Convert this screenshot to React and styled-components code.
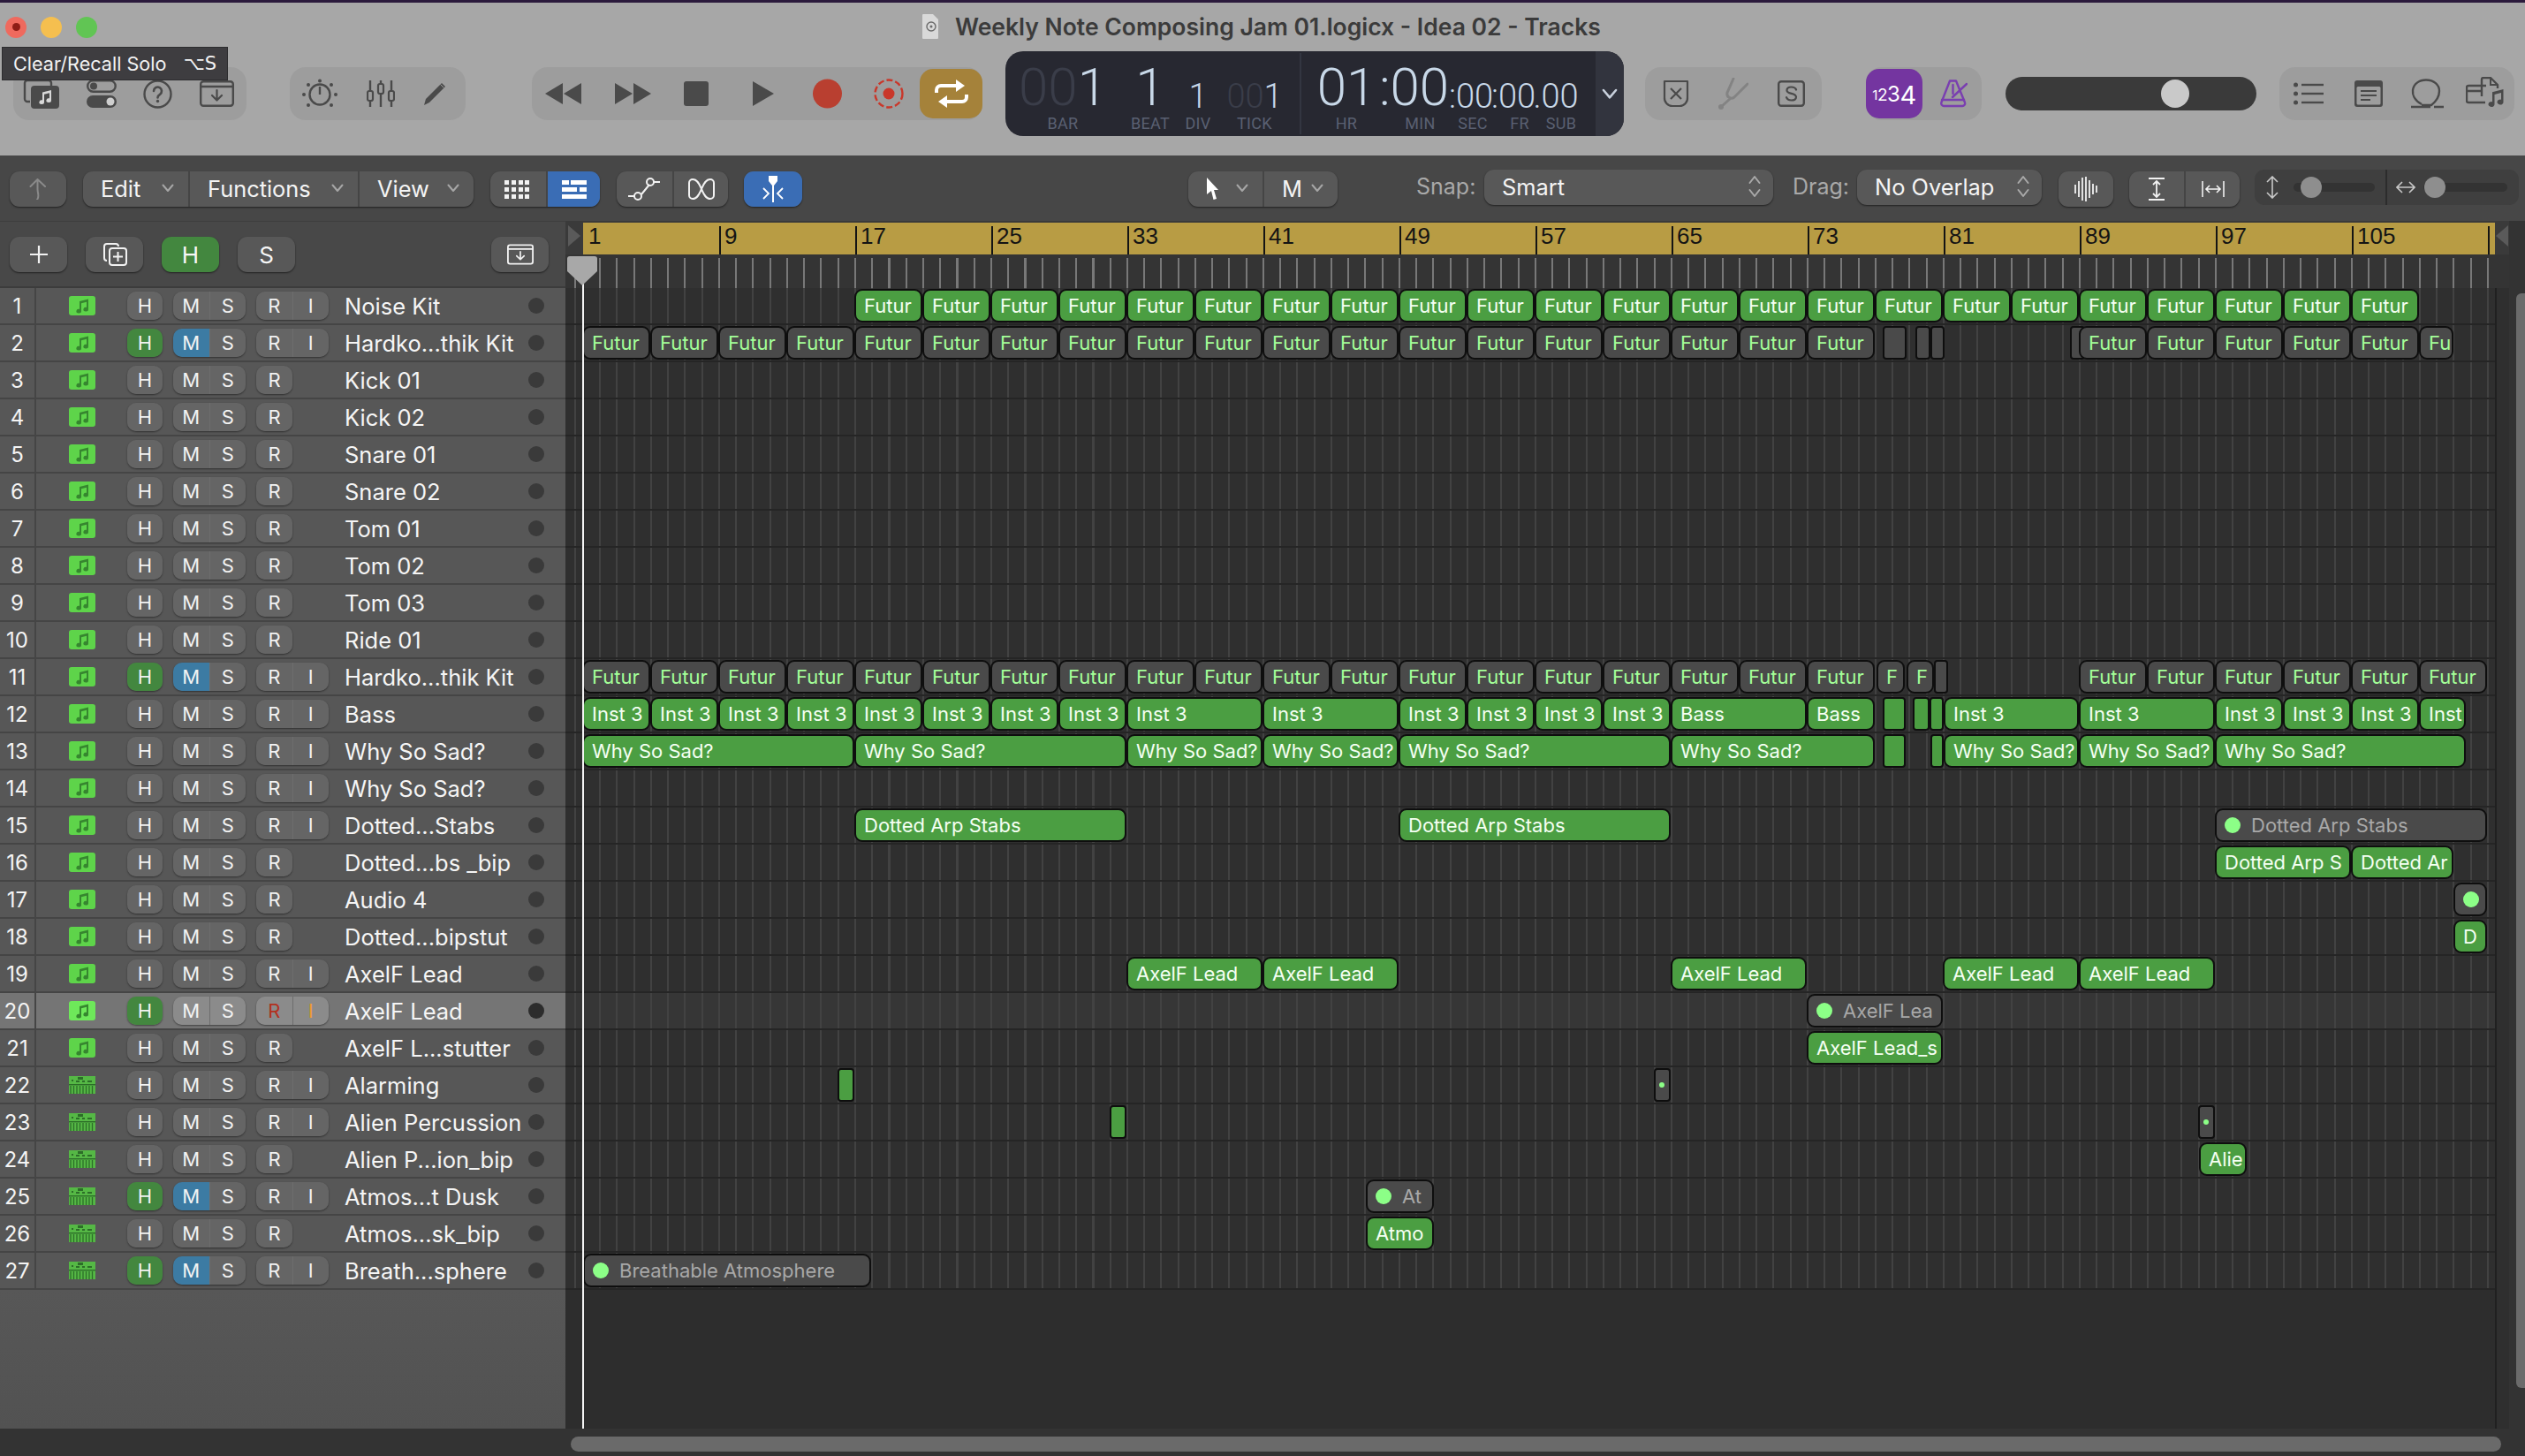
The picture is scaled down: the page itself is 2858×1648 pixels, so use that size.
import React from "react"
import styled, { createGlobalStyle } from "styled-components"

const Global = createGlobalStyle`
  html, body {
    margin: 0;
    background: #333;
    overflow: hidden;
  }
  * {
    box-sizing: border-box;
  }
  body {
    font-family: Inter, "Noto Sans", sans-serif;
  }
`

const BAR = 19.25
const bx = (bar) => 659 + (bar - 1) * BAR

const Window = styled.div`
  position: relative;
  width: 2858px;
  height: 1648px;
  display: flex;
  flex-direction: column;
  overflow: hidden;
`

const TopBar = styled.header`
  height: 176px;
  flex: none;
  background: #a7a7a7;
  border-top: 3px solid #2b1a3c;
`

const TitleRow = styled.div`
  height: 55px;
  padding-left: 6px;
  display: flex;
  align-items: center;
`

const Lights = styled.div`
  display: flex;
  gap: 16px;
`

const Light = styled.span`
  width: 24px;
  height: 24px;
  border-radius: 50%;
  background: ${(p) => p.$color};
  display: flex;
  align-items: center;
  justify-content: center;
  &::after {
    content: "";
    display: ${(p) => (p.$dot ? "block" : "none")};
    width: 9px;
    height: 9px;
    border-radius: 50%;
    background: #8e1d16;
  }
`

const Title = styled.div`
  margin-left: 934px;
  padding-bottom: 2px;
  display: flex;
  align-items: center;
  gap: 19px;
  font-size: 26.5px;
  font-weight: 600;
  color: #3b3b3b;
  white-space: nowrap;
`

const ToolRow = styled.div`
  height: 96px;
  padding-left: 15px;
  display: flex;
  align-items: center;
`

const Group = styled.div`
  width: ${(p) => p.$w}px;
  margin-left: ${(p) => p.$ml || 0}px;
  height: 60px;
  flex: none;
  border-radius: 18px;
  background: #9d9d9d;
  display: flex;
  align-items: center;
  justify-content: ${(p) => (p.$start ? "flex-start" : "space-between")};
  padding: ${(p) => p.$pad || "0"};
`

const Spot = styled.span`
  margin-left: ${(p) => p.$ml || 0}px;
  flex: none;
  display: flex;
`

const LoopButton = styled.div`
  width: 71px;
  height: 56px;
  border-radius: 15px;
  background: #a5823a;
  display: flex;
  align-items: center;
  justify-content: center;
`

const Lcd = styled.div`
  width: 700px;
  height: 96px;
  margin-left: 26px;
  flex: none;
  border-radius: 20px;
  background: #272831;
  display: flex;
  overflow: hidden;
  font-family: Roboto, Inter, sans-serif;
`

const LcdBody = styled.div`
  flex: 1;
  padding-left: 15px;
  display: flex;
`

const LcdChevron = styled.div`
  width: 32px;
  flex: none;
  background: #32343e;
  display: flex;
  align-items: center;
  justify-content: center;
`

const LcdCell = styled.div`
  width: ${(p) => p.$w}px;
  margin-left: ${(p) => p.$ml || 0}px;
  flex: none;
  display: flex;
  flex-direction: column;
  align-items: center;
`

const LcdValue = styled.div`
  height: 70px;
  display: flex;
  align-items: flex-end;
  font-size: ${(p) => (p.$big ? 60 : 38)}px;
  line-height: ${(p) => (p.$big ? 58 : 38)}px;
  font-weight: 300;
  color: #c8d8e8;
  white-space: nowrap;
`

const Dim = styled.span`
  color: #3a3d49;
`

const LcdLabel = styled.div`
  margin-top: 2px;
  padding-left: ${(p) => p.$shift || 0}px;
  font-size: 18px;
  line-height: 20px;
  color: #5a6072;
  letter-spacing: 0.3px;
`

const LcdDivider = styled.div`
  width: 2px;
  margin: 2px 15px 2px 19px;
  flex: none;
  background: #333641;
`

const CountIn = styled.div`
  width: 64px;
  height: 56px;
  border-radius: 15px;
  background: #7435a0;
  color: #fff;
  display: flex;
  align-items: center;
  justify-content: center;
  padding-top: 2px;
  font-weight: 400;
`

const CountDigit = styled.span`
  font-size: ${(p) => p.$s}px;
  line-height: 1;
  letter-spacing: -0.5px;
`

const Volume = styled.div`
  width: 284px;
  height: 38px;
  margin-left: 27px;
  flex: none;
  border-radius: 19px;
  background: #3a3a3a;
  padding-left: 176px;
  display: flex;
  align-items: center;
`

const VolumeKnob = styled.div`
  width: 32px;
  height: 32px;
  border-radius: 50%;
  background: #c9c9c9;
`

const Tooltip = styled.div`
  position: absolute;
  left: 2px;
  top: 53px;
  width: 256px;
  height: 38px;
  padding: 0 12px;
  background: #3e3d40;
  border: 1px solid #2d2d2f;
  color: #f2f2f2;
  font-size: 21.6px;
  display: flex;
  align-items: center;
  justify-content: space-between;
`

const ToolKey = styled.span`
  font-family: "DejaVu Sans", Inter, sans-serif;
  font-size: 21px;
`

const EditBar = styled.div`
  height: 74px;
  flex: none;
  background: #474747;
  padding: 18px 0 0 11px;
  display: flex;
  align-items: flex-start;
`

const Seg = styled.div`
  height: 40px;
  margin-left: ${(p) => p.$ml || 0}px;
  flex: none;
  border-radius: 11px;
  background: #585858;
  box-shadow: 0 1px 2px rgba(0, 0, 0, 0.55);
  display: flex;
  overflow: hidden;
`

const SegItem = styled.div`
  width: ${(p) => p.$w}px;
  flex: none;
  height: 100%;
  display: flex;
  align-items: center;
  justify-content: ${(p) => (p.$spread ? "space-between" : "center")};
  padding: ${(p) => (p.$spread ? "0 16px 2px 20px" : p.$pad || "0")};
  background: ${(p) => (p.$blue ? "#3a6db5" : "transparent")};
  color: #f4f4f4;
  font-size: 25.4px;
  & + & {
    border-left: 2px solid ${(p) => (p.$blue ? "#3a6db5" : "#454545")};
  }
`

const FieldLabel = styled.div`
  width: ${(p) => p.$w}px;
  margin-left: ${(p) => p.$ml}px;
  flex: none;
  height: 34px;
  display: flex;
  align-items: center;
  font-size: 25px;
  color: #a9a9a9;
`

const Select = styled.div`
  width: ${(p) => p.$w}px;
  height: 40px;
  margin-top: -2px;
  flex: none;
  border-radius: 11px;
  background: #585858;
  box-shadow: 0 1px 2px rgba(0, 0, 0, 0.55);
  padding: 0 14px 2px 20px;
  display: flex;
  align-items: center;
  justify-content: space-between;
  color: #f4f4f4;
  font-size: 25.4px;
`

const ZoomWell = styled.div`
  width: 299px;
  height: 40px;
  margin: -2px 0 0 17px;
  flex: none;
  border-radius: 11px;
  background: #3f3f3f;
  display: flex;
`

const ZoomPart = styled.div`
  width: ${(p) => p.$w}px;
  flex: none;
  display: flex;
  align-items: center;
  gap: ${(p) => p.$gap}px;
  padding: ${(p) => p.$pad};
  & + & {
    border-left: 2px solid #2c2c2c;
  }
`

const ZoomTrack = styled.div`
  flex: 1;
  height: 10px;
  border-radius: 5px;
  background: #333;
  display: flex;
  align-items: center;
`

const ZoomKnob = styled.div`
  width: 24px;
  height: 24px;
  flex: none;
  border-radius: 50%;
  background: #8e8e8e;
  margin-left: ${(p) => p.$ml}px;
`

const Main = styled.div`
  flex: 1;
  min-height: 0;
  display: flex;
`

const TrackColumn = styled.section`
  width: 640px;
  flex: none;
  display: flex;
  flex-direction: column;
`

const TrackTools = styled.div`
  height: 76px;
  flex: none;
  background: #484848;
  border-top: 1px solid #3e3e3e;
  border-bottom: 2px solid #3c3c3c;
  padding: 17px 0 0 11px;
  display: flex;
  align-items: flex-start;
`

const SquareButton = styled.div`
  width: 65px;
  height: 40px;
  margin-left: ${(p) => p.$ml || 0}px;
  flex: none;
  border-radius: 11px;
  background: ${(p) => (p.$on ? "#43873f" : "#585858")};
  box-shadow: 0 1px 2px rgba(0, 0, 0, 0.55);
  color: #f6f6f6;
  font-size: 26px;
  display: flex;
  align-items: center;
  justify-content: center;
`

const TrackRow = styled.div`
  height: 42px;
  flex: none;
  display: flex;
  align-items: center;
  background: ${(p) => (p.$sel ? "#757575" : "#575757")};
  border-bottom: 2px solid #454545;
`

const TrackNumber = styled.div`
  width: 41px;
  height: 100%;
  flex: none;
  border-right: 2px solid #454545;
  color: #f4f4f4;
  font-size: 24px;
  display: flex;
  align-items: center;
  justify-content: center;
`

const IconSlot = styled.div`
  width: 30px;
  height: 22px;
  margin: 0 36px 0 37px;
  flex: none;
  display: flex;
  align-items: center;
`

const Cluster = styled.div`
  width: ${(p) => p.$w}px;
  height: 32px;
  margin-right: ${(p) => p.$mr || 0}px;
  flex: none;
  display: flex;
`

const Pair = styled.div`
  width: ${(p) => p.$w}px;
  height: 32px;
  border-radius: 10px;
  overflow: hidden;
  display: flex;
  box-shadow: 0 1px 2px rgba(0, 0, 0, 0.45);
`

const TrackBtn = styled.div`
  flex: 1;
  height: 100%;
  background: ${(p) => p.$bg || (p.$sel ? "#8b8b8b" : "#656565")};
  color: ${(p) => p.$fg || "#f2f2f2"};
  font-size: 22px;
  display: flex;
  align-items: center;
  justify-content: center;
  & + & {
    border-left: 1px solid ${(p) => (p.$sel ? "#6d6d6d" : "#4d4d4d")};
  }
`

const TrackName = styled.div`
  width: 208px;
  flex: none;
  margin-left: 18px;
  font-size: 25.5px;
  color: #f5f5f5;
  white-space: nowrap;
  overflow: hidden;
`

const TrackDot = styled.div`
  width: 18px;
  height: 18px;
  flex: none;
  border-radius: 50%;
  background: ${(p) => (p.$sel ? "#2c2c2c" : "#3a3a3a")};
`

const TrackRest = styled.div`
  flex: 1;
  background: linear-gradient(#575757, #525252);
`

const Arrange = styled.section`
  position: relative;
  flex: 1;
  background: #2d2d2d;
  display: flex;
  flex-direction: column;
`

const RulerRow = styled.div`
  height: 38px;
  flex: none;
  padding-top: 2px;
  background: #3a3a3a;
  display: flex;
`

const RulerCap = styled.div`
  width: ${(p) => p.$w}px;
  flex: none;
  display: flex;
  align-items: center;
  justify-content: center;
  padding-bottom: 6px;
`

const Ruler = styled.div`
  width: 2164px;
  flex: none;
  background: #b89c44;
  display: flex;
  overflow: hidden;
`

const RulerBar = styled.div`
  width: ${8 * BAR}px;
  flex: none;
  margin-top: 4px;
  padding-left: 4px;
  border-left: 2px solid ${(p) => (p.$first ? "transparent" : "#141414")};
  color: #141414;
  font-family: "Liberation Sans", Arial, sans-serif;
  font-size: 26px;
  line-height: 23px;
`

const BeatStrip = styled.div`
  height: 38px;
  flex: none;
  padding-top: 4px;
  background: #343434;
`

const BeatTicks = styled.div`
  width: 2184px;
  height: 100%;
  background-image: repeating-linear-gradient(to right, #787878 0 2px, transparent 2px ${BAR}px);
  background-position-x: 19px;
`

const Lanes = styled.div`
  width: 2184px;
  flex: none;
`

const Lane = styled.div`
  position: relative;
  height: 42px;
  border-bottom: 2px solid #252525;
  background-color: ${(p) => (p.$sel ? "#363636" : "#2f2f2f")};
  background-image: repeating-linear-gradient(to right, #424242 0 2px, transparent 2px ${BAR}px);
  background-position-x: 19px;
`

const Region = styled.div.attrs((p) => ({
  style: { left: p.$from - 640, width: p.$to - p.$from },
}))`
  position: absolute;
  top: 1px;
  height: 38px;
  padding: 0 0 1px 9px;
  border: 2px solid #0e0e0e;
  border-radius: ${(p) => (p.$narrow ? 4 : 9)}px;
  background: ${(p) => (p.$kind === "g" ? "#4b9e42" : "#4a4a4a")};
  color: ${(p) => (p.$kind === "g" ? "#f4fff2" : p.$kind === "m" ? "#a4ff98" : "#a8a8a8")};
  font-size: 22px;
  display: flex;
  align-items: center;
  gap: 12px;
  white-space: nowrap;
  overflow: hidden;
`

const RegionDot = styled.span`
  width: ${(p) => (p.$tiny ? 6 : 18)}px;
  height: ${(p) => (p.$tiny ? 6 : 18)}px;
  flex: none;
  border-radius: 50%;
  background: #8cff87;
  margin-left: ${(p) => (p.$tiny ? -5 : 0)}px;
`

const ArrangeRest = styled.div`
  flex: 1;
  background: #2d2d2d;
`

const RightEdge = styled.div`
  position: absolute;
  right: 0;
  top: 76px;
  bottom: 0;
  width: 16px;
  background: #2f2f2f;
  border-left: 2px solid #202020;
`

const PlayLine = styled.div`
  position: absolute;
  left: 19px;
  top: 40px;
  bottom: 0;
  width: 2px;
  background: #f4f4f4;
`

const PlayHead = styled.svg`
  position: absolute;
  left: 2px;
  top: 40px;
`

const VScroll = styled.div`
  width: 18px;
  flex: none;
  background: #333;
  padding: 82px 0 0 8px;
`

const VThumb = styled.div`
  height: 1239px;
  border-radius: 6px 0 0 6px;
  background: #6b6b6b;
`

const BottomBar = styled.div`
  height: 31px;
  flex: none;
  background: #333;
  padding: 9px 0 0 646px;
`

const HThumb = styled.div`
  width: 2185px;
  height: 17px;
  border-radius: 9px;
  background: #6a6a6a;
`

const INK = "#4a4a4a"

const Ico = ({ w, h, children, ...rest }) => (
  <svg width={w} height={h} viewBox={`0 0 ${w} ${h}`} fill="none" style={{ flex: "none" }} {...rest}>
    {children}
  </svg>
)

const NotePath = ({ x, y, s = 1, color }) => (
  <g transform={`translate(${x} ${y}) scale(${s})`} fill={color}>
    <path d="M4 2.5 L14 0 V11.5 A2.8 2.4 0 1 1 12 9.3 V3.2 L6 4.7 V13.5 A2.8 2.4 0 1 1 4 11.3 Z" />
  </g>
)

const LibraryIcon = () => (
  <Ico w={41} h={33}>
    <path d="M8 25 H5 a3 3 0 0 1 -3 -3 V4 a3 3 0 0 1 3 -3 H29 a3 3 0 0 1 3 3 V7" stroke={INK} strokeWidth="2.4" />
    <rect x="9" y="7" width="32" height="26" rx="4" fill={INK} />
    <NotePath x={18} y={12} color="#d8d8d8" />
  </Ico>
)

const ToggleIcon = () => (
  <Ico w={34} h={32}>
    <rect x="1.2" y="1.2" width="31.5" height="12.5" rx="6.2" stroke={INK} strokeWidth="2.4" />
    <circle cx="8" cy="7.5" r="4" fill={INK} />
    <rect x="0" y="18" width="34" height="14" rx="7" fill={INK} />
    <circle cx="27" cy="25" r="4.5" fill="#cfcfcf" />
  </Ico>
)

const HelpIcon = () => (
  <Ico w={33} h={33}>
    <circle cx="16.5" cy="16.5" r="15" stroke={INK} strokeWidth="2.4" />
    <path d="M12 13 a4.5 4.5 0 1 1 7 3.8 c-1.6 1 -2.5 1.8 -2.5 3.6" stroke={INK} strokeWidth="2.6" strokeLinecap="round" />
    <circle cx="16.5" cy="24.5" r="1.7" fill={INK} />
  </Ico>
)

const StoreIcon = ({ color = INK, w = 39, h = 30 }) => (
  <svg width={w} height={h} viewBox="0 0 39 30" fill="none" style={{ flex: "none" }}>
    <rect x="1.2" y="1.2" width="36.6" height="27.6" rx="3" stroke={color} strokeWidth="2.4" />
    <path d="M1 7 H38" stroke={color} strokeWidth="2.4" />
    <path d="M19.5 11 V22 M14 17 L19.5 22.5 L25 17" stroke={color} strokeWidth="2.2" strokeLinecap="round" strokeLinejoin="round" />
  </svg>
)

const KnobIcon = () => (
  <Ico w={40} h={34}>
    <circle cx="20" cy="18" r="11.5" stroke={INK} strokeWidth="2.4" />
    <path d="M20 18 V9" stroke={INK} strokeWidth="2.4" />
    {[[20, 2.5], [7, 7], [33, 7], [2, 18], [38, 18], [7, 30], [33, 30]].map(([cx, cy]) => (
      <circle key={`${cx}-${cy}`} cx={cx} cy={cy} r="2" fill={INK} />
    ))}
  </Ico>
)

const MixerIcon = () => (
  <Ico w={32} h={30}>
    {[[4, 17], [16, 9], [28, 17]].map(([x, y]) => (
      <g key={x}>
        <path d={`M${x} 0 V30`} stroke={INK} strokeWidth="2.4" />
        <rect x={x - 3} y={y - 5} width="6" height="11" rx="2" fill="#9d9d9d" stroke={INK} strokeWidth="2.2" />
      </g>
    ))}
  </Ico>
)

const PencilIcon = () => (
  <Ico w={27} h={28}>
    <path d="M1 27 L3 20 L21 2 L25 6 L7 24 Z" fill={INK} />
    <path d="M19.5 3.5 L23.5 7.5" stroke="#9d9d9d" strokeWidth="1" />
  </Ico>
)

const DoubleArrow = ({ left }) => (
  <Ico w={45} h={26}>
    <g fill={INK} transform={left ? "translate(45 0) scale(-1 1)" : undefined}>
      <path d="M2 1 L22 13 L2 25 Z" />
      <path d="M23 1 L43 13 L23 25 Z" />
    </g>
  </Ico>
)

const StopIcon = () => (
  <Ico w={28} h={28}>
    <rect width="28" height="28" rx="3" fill={INK} />
  </Ico>
)

const PlayIcon = () => (
  <Ico w={26} h={28}>
    <path d="M1 0 L25 14 L1 28 Z" fill={INK} />
  </Ico>
)

const RecordIcon = () => (
  <Ico w={33} h={34}>
    <circle cx="16.5" cy="17" r="16.5" fill="#b93f30" />
  </Ico>
)

const CycleRecIcon = () => (
  <Ico w={34} h={34}>
    <circle cx="17" cy="17" r="15.5" stroke="#c9372a" strokeWidth="2.4" strokeDasharray="7 3" />
    <circle cx="17" cy="17" r="6.5" fill="#c9372a" />
  </Ico>
)

const LoopIcon = () => (
  <Ico w={38} h={32}>
    <path d="M2 15 V12 a5 5 0 0 1 5 -5 H27" stroke="#fff" strokeWidth="4" />
    <path d="M24 0 L34 7 L24 14 Z" fill="#fff" />
    <path d="M36 17 V20 a5 5 0 0 1 -5 5 H11" stroke="#fff" strokeWidth="4" />
    <path d="M14 18 L4 25 L14 32 Z" fill="#fff" />
  </Ico>
)

const ChevronIcon = ({ color = "#a6a6a6", w = 14, h = 10 }) => (
  <svg width={w} height={h} viewBox="0 0 14 10" fill="none" style={{ flex: "none" }}>
    <path d="M1.5 1.5 L7 8 L12.5 1.5" stroke={color} strokeWidth="2" strokeLinecap="round" strokeLinejoin="round" />
  </svg>
)

const UpDownIcon = () => (
  <Ico w={14} h={26}>
    <path d="M1.5 9 L7 2 L12.5 9 M1.5 17 L7 24 L12.5 17" stroke="#a9a9a9" strokeWidth="2" strokeLinecap="round" strokeLinejoin="round" />
  </Ico>
)

const ScoreXIcon = () => (
  <Ico w={30} h={32}>
    <path d="M2 2 H28 V20 a9 9 0 0 1 -9 10 H11 a9 9 0 0 1 -9 -10 Z" stroke={INK} strokeWidth="2.2" strokeLinejoin="round" />
    <path d="M9 10 L21 22 M21 10 L9 22" stroke={INK} strokeWidth="2.2" />
  </Ico>
)

const TunerIcon = () => (
  <Ico w={34} h={36}>
    <path d="M17 1 L10 17 a5 5 0 0 0 8 5 L33 7 M13 24 L3 33" stroke="#838383" strokeWidth="3" strokeLinecap="round" />
    <circle cx="3" cy="33" r="3" fill="#838383" />
  </Ico>
)

const SoloBoxIcon = () => (
  <Ico w={31} h={30}>
    <rect x="1.2" y="1.2" width="28.6" height="27.6" rx="3" stroke={INK} strokeWidth="2.4" />
    <path d="M21 10.5 C20 8 17.5 7.5 15.5 7.5 C12.5 7.5 10.5 9 10.5 11.2 C10.5 16 21 13.8 21 18.8 C21 21.2 18.5 22.5 15.5 22.5 C13 22.5 10.8 21.5 10 19.2" stroke={INK} strokeWidth="2.2" strokeLinecap="round" />
  </Ico>
)

const MetronomeIcon = () => (
  <Ico w={32} h={32}>
    <g stroke="#7a3fb0" strokeWidth="2.4" strokeLinejoin="round" strokeLinecap="round">
      <path d="M12 1.5 H19 L29 26 a3 3 0 0 1 -3 4 H5 a3 3 0 0 1 -2.6 -4 Z" />
      <path d="M3 23 H28" />
      <path d="M15 20 L31 5" />
      <path d="M15.5 6 V16" />
    </g>
  </Ico>
)

const ListIcon = () => (
  <Ico w={34} h={26}>
    {[3, 13, 23].map((y) => (
      <g key={y}>
        <circle cx="2.5" cy={y} r="2.5" fill={INK} />
        <path d={`M9 ${y} H34`} stroke={INK} strokeWidth="2.4" />
      </g>
    ))}
  </Ico>
)

const NotesIcon = () => (
  <Ico w={32} h={30}>
    <rect width="32" height="30" rx="3" fill={INK} />
    <rect x="2.5" y="7" width="27" height="20.5" rx="1.5" fill="#9d9d9d" />
    <path d="M7 12 H25 M7 17 H25 M7 22 H18" stroke={INK} strokeWidth="2.2" />
  </Ico>
)

const LoopsIcon = () => (
  <Ico w={37} h={34}>
    <path d="M12 29 C3 24 1.5 17 2 13 C3 6 9 1.5 17 1.5 C26 1.5 32 7 32 14 C32 21 28 26 23 30 H12" stroke={INK} strokeWidth="2.4" />
    <path d="M0 32 H22 M26 32 H37" stroke={INK} strokeWidth="2.4" />
  </Ico>
)

const BrowserIcon = () => (
  <Ico w={46} h={38}>
    <path d="M23 10 H3 a2 2 0 0 0 -2 2 V27 a2 2 0 0 0 2 2 H22 M1 16 H18" stroke={INK} strokeWidth="2.4" />
    <path d="M18 22 V3 a2 2 0 0 1 2 -2 H28 L36 9 V13" stroke={INK} strokeWidth="2.4" strokeLinejoin="round" />
    <path d="M28 1 V9 H36" stroke={INK} strokeWidth="2" />
    <NotePath x={25} y={14} s={1.25} color={INK} />
  </Ico>
)

const BackIcon = () => (
  <Ico w={21} h={24}>
    <path d="M9 24 C12 20 9.5 17 9.5 12 V2 M1.5 9 L9.5 1 L18 9" stroke="#8a8a8a" strokeWidth="2" strokeLinecap="round" strokeLinejoin="round" />
  </Ico>
)

const GridIcon = () => (
  <Ico w={28} h={21}>
    {[0, 8, 16].map((y) =>
      [0, 8, 16, 23].map((x) => <rect key={`${x}-${y}`} x={x} y={y} width="5" height="5" fill="#f2f2f2" />)
    )}
  </Ico>
)

const RowsIcon = () => (
  <Ico w={28} h={21}>
    <g fill="#fff">
      <rect x="0" y="0" width="8" height="5" />
      <rect x="10" y="0" width="18" height="5" />
      <rect x="0" y="8" width="17" height="5" />
      <rect x="20" y="8" width="8" height="5" />
      <rect x="0" y="16" width="28" height="5" />
    </g>
  </Ico>
)

const CurveIcon = () => (
  <Ico w={36} h={26}>
    <path d="M0 21 H7 M15 19 L24 8 M29 5 H36" stroke="#f2f2f2" strokeWidth="2" />
    <circle cx="11" cy="21" r="4" stroke="#f2f2f2" strokeWidth="2" />
    <circle cx="25" cy="5" r="4" stroke="#f2f2f2" strokeWidth="2" />
  </Ico>
)

const CrossCurveIcon = () => (
  <Ico w={30} h={24}>
    <path d="M1 5 a4 4 0 0 1 4 -4 C11 1 13 8 15 12 C17 16 19 23 25 23 a4 4 0 0 0 4 -4 V5 a4 4 0 0 0 -4 -4 C19 1 17 8 15 12 C13 16 11 23 5 23 a4 4 0 0 1 -4 -4 Z" stroke="#f2f2f2" strokeWidth="2" />
  </Ico>
)

const FlexIcon = () => (
  <Ico w={24} h={30}>
    <path d="M7 0 H17 V6 L13 11 V30 H11 V11 L7 6 Z" fill="#fff" />
    <path d="M1 14 L7 20 L1 26 M23 14 L17 20 L23 26" stroke="#fff" strokeWidth="1.8" />
  </Ico>
)

const CursorIcon = () => (
  <Ico w={15} h={25}>
    <path d="M1 0 L14 14 L9 14 L12 24 L8.5 25 L6 15 L1 19 Z" fill="#fff" />
  </Ico>
)

const WaveIcon = () => (
  <Ico w={26} h={28}>
    {[[1, 5], [5, 9], [9, 13], [13, 14], [17, 10], [21, 6], [25, 4]].map(([x, r]) => (
      <path key={x} d={`M${x} ${14 - r} V${14 + r}`} stroke="#f2f2f2" strokeWidth="1.8" />
    ))}
  </Ico>
)

const FitVIcon = () => (
  <Ico w={18} h={26}>
    <path d="M0 1 H18 M0 25 H18 M9 5 V21 M5 8 L9 4 L13 8 M5 18 L9 22 L13 18" stroke="#f2f2f2" strokeWidth="1.8" />
  </Ico>
)

const FitHIcon = () => (
  <Ico w={26} h={18}>
    <path d="M1 0 V18 M25 0 V18 M5 9 H21 M9 5 L5 9 L9 13 M17 5 L21 9 L17 13" stroke="#f2f2f2" strokeWidth="1.6" />
  </Ico>
)

const VArrowIcon = () => (
  <Ico w={14} h={26}>
    <path d="M7 1 V25 M1 7 L7 1 L13 7 M1 19 L7 25 L13 19" stroke="#c8c8c8" strokeWidth="1.6" />
  </Ico>
)

const HArrowIcon = () => (
  <Ico w={22} h={16}>
    <path d="M1 8 H21 M7 2 L1 8 L7 14 M15 2 L21 8 L15 14" stroke="#c8c8c8" strokeWidth="1.6" />
  </Ico>
)

const PlusIcon = () => (
  <Ico w={20} h={20}>
    <path d="M10 0 V20 M0 10 H20" stroke="#f2f2f2" strokeWidth="2.2" />
  </Ico>
)

const DuplicateIcon = () => (
  <Ico w={28} h={26}>
    <path d="M5 20 a3 3 0 0 1 -3 -3 V4 a3 3 0 0 1 3 -3 H15 a3 3 0 0 1 3 3" stroke="#f2f2f2" strokeWidth="2" />
    <rect x="8" y="6" width="19" height="19" rx="3" stroke="#f2f2f2" strokeWidth="2" />
    <path d="M17.5 10 V21 M12 15.5 H23" stroke="#f2f2f2" strokeWidth="2" />
  </Ico>
)

const FileIcon = () => (
  <Ico w={18} h={28}>
    <path d="M0 1 a1 1 0 0 1 1 -1 H12 L18 6 V27 a1 1 0 0 1 -1 1 H1 a1 1 0 0 1 -1 -1 Z" fill="#d9d9d9" />
    <circle cx="10" cy="14" r="5" stroke="#6a6a6a" strokeWidth="1.4" />
    <circle cx="10" cy="14" r="1.5" fill="#6a6a6a" />
  </Ico>
)

const AudioTrackIcon = ({ sel }) => (
  <Ico w={30} h={22}>
    <rect width="30" height="22" rx="3" fill={sel ? "#6ee85a" : "#5ed44a"} />
    <NotePath x={8} y={3.5} color="#36862f" />
  </Ico>
)

const SynthTrackIcon = () => (
  <Ico w={30} h={20}>
    <rect width="30" height="20" fill="#55b845" />
    <g fill="#2c6e28">
      <rect x="10" y="1" width="6" height="3" />
      <rect x="3" y="4" width="2" height="2" />
      <rect x="8" y="5" width="4" height="2" />
      <rect x="15" y="5" width="3" height="2" />
      <rect x="21" y="5" width="5" height="2" />
      <rect x="0" y="9" width="30" height="1.4" />
    </g>
    {[2, 5.5, 9, 12.5, 16, 19.5, 23, 26.5].map((x) => (
      <path key={x} d={`M${x} 11 V20`} stroke="#2c6e28" strokeWidth="1.3" />
    ))}
  </Ico>
)

const seq = (from, to, step, label, kind) => {
  const out = []
  for (let b = from; b < to; b += step) out.push([bx(b), bx(b + step), label, kind])
  return out
}

const span = (from, to, label) => [bx(from), bx(to), label, "g"]

const regionRows = {
  1: seq(17, 109, 4, "Futur", "g"),
  2: [
    ...seq(1, 77, 4, "Futur", "m"),
    [2131, 2158, "", "m"],
    [2168, 2185, "", "m"],
    [2185, 2201, "", "m"],
    [2343, 2360, "", "m"],
    ...seq(89, 109, 4, "Futur", "m"),
    [bx(109), 2777, "Fu", "m"],
  ],
  11: [
    ...seq(1, 77, 4, "Futur", "m"),
    [2124, 2156, "F", "m"],
    [2158, 2189, "F", "m"],
    [2189, 2205, "", "m"],
    ...seq(89, 113, 4, "Futur", "m"),
  ],
  12: [
    ...seq(1, 33, 4, "Inst 3", "g"),
    span(33, 41, "Inst 3"),
    span(41, 49, "Inst 3"),
    ...seq(49, 65, 4, "Inst 3", "g"),
    span(65, 73, "Bass"),
    span(73, 77, "Bass"),
    [2131, 2157, "", "g"],
    [2165, 2184, "", "g"],
    [2184, 2200, "", "g"],
    [2200, bx(89), "Inst 3", "g"],
    span(89, 97, "Inst 3"),
    ...seq(97, 109, 4, "Inst 3", "g"),
    [bx(109), 2791, "Inst", "g"],
  ],
  13: [
    span(1, 17, "Why So Sad?"),
    span(17, 33, "Why So Sad?"),
    span(33, 41, "Why So Sad?"),
    span(41, 49, "Why So Sad?"),
    span(49, 65, "Why So Sad?"),
    span(65, 77, "Why So Sad?"),
    [2131, 2157, "", "g"],
    [2185, 2200, "", "g"],
    [2200, bx(89), "Why So Sad?", "g"],
    span(89, 97, "Why So Sad?"),
    [bx(97), 2791, "Why So Sad?", "g"],
  ],
  15: [
    span(17, 33, "Dotted Arp Stabs"),
    span(49, 65, "Dotted Arp Stabs"),
    [bx(97), bx(113), "Dotted Arp Stabs", "d"],
  ],
  16: [
    [bx(97), bx(105), "Dotted Arp S", "g"],
    [bx(105), 2777, "Dotted Ar", "g"],
  ],
  17: [[2777, 2815, "", "d"]],
  18: [[2777, 2815, "D", "g"]],
  19: [span(33, 41, "AxelF Lead"), span(41, 49, "AxelF Lead"), span(65, 73, "AxelF Lead"), span(81, 89, "AxelF Lead"), span(89, 97, "AxelF Lead")],
  20: [[bx(73), bx(81), "AxelF Lea", "d"]],
  21: [[bx(73), bx(81), "AxelF Lead_s", "g"]],
  22: [
    [948, 967, "", "g"],
    [1872, 1891, "", "t"],
  ],
  23: [
    [1256, 1275, "", "g"],
    [2488, 2507, "", "t"],
  ],
  24: [[2489, 2543, "Alie", "g"]],
  25: [[1546, 1623, "At", "d"]],
  26: [[1546, 1623, "Atmo", "g"]],
  27: [[660, 986, "Breathable Atmosphere", "d"]],
}

const tracks = [
  ["Noise Kit", "I"],
  ["Hardko...thik Kit", "IHM"],
  ["Kick 01"],
  ["Kick 02"],
  ["Snare 01"],
  ["Snare 02"],
  ["Tom 01"],
  ["Tom 02"],
  ["Tom 03"],
  ["Ride 01"],
  ["Hardko...thik Kit", "IHM"],
  ["Bass", "I"],
  ["Why So Sad?", "I"],
  ["Why So Sad?", "I"],
  ["Dotted...Stabs", "I"],
  ["Dotted...bs _bip"],
  ["Audio 4"],
  ["Dotted...bipstut"],
  ["AxelF Lead", "I"],
  ["AxelF Lead", "IH"],
  ["AxelF L...stutter"],
  ["Alarming", "I"],
  ["Alien Percussion", "I"],
  ["Alien P...ion_bip"],
  ["Atmos...t Dusk", "IHM"],
  ["Atmos...sk_bip"],
  ["Breath...sphere", "IHM"],
]

const SELECTED = 20
const rulerBars = Array.from({ length: 15 }, (_, i) => 1 + i * 8)

function Track({ index, name, flags = "" }) {
  const sel = index === SELECTED
  return (
    <TrackRow $sel={sel}>
      <TrackNumber>{index}</TrackNumber>
      <IconSlot>{index < 22 ? <AudioTrackIcon sel={sel} /> : <SynthTrackIcon />}</IconSlot>
      <Cluster $w={40} $mr={12}>
        <Pair $w={40}>
          <TrackBtn $sel={sel} $bg={flags.includes("H") ? "#43873f" : undefined}>
            H
          </TrackBtn>
        </Pair>
      </Cluster>
      <Cluster $w={82} $mr={12}>
        <Pair $w={82}>
          <TrackBtn $sel={sel} $bg={flags.includes("M") ? "#3c7ba3" : undefined}>
            M
          </TrackBtn>
          <TrackBtn $sel={sel}>S</TrackBtn>
        </Pair>
      </Cluster>
      <Cluster $w={82}>
        <Pair $w={flags.includes("I") ? 82 : 41}>
          <TrackBtn $sel={sel} $fg={sel ? "#b3301e" : undefined}>
            R
          </TrackBtn>
          {flags.includes("I") && (
            <TrackBtn $sel={sel} $fg={sel ? "#e89b2c" : undefined}>
              I
            </TrackBtn>
          )}
        </Pair>
      </Cluster>
      <TrackName>{name}</TrackName>
      <TrackDot $sel={sel} />
    </TrackRow>
  )
}

function TrackLane({ index }) {
  const regions = regionRows[index] || []
  return (
    <Lane $sel={index === SELECTED}>
      {regions.map(([from, to, label, kind]) => (
        <Region
          key={`${from}-${to}`}
          $from={from}
          $to={to}
          $kind={kind === "t" ? "d" : kind}
          $narrow={to - from < 30 && !label && kind !== "d"}
        >
          {kind === "d" && <RegionDot />}
          {kind === "t" && <RegionDot $tiny />}
          {label}
        </Region>
      ))}
    </Lane>
  )
}

function Transport() {
  return (
    <Lcd>
      <LcdBody>
        <LcdCell $w={100}>
          <LcdValue $big>
            <Dim>00</Dim>1
          </LcdValue>
          <LcdLabel>BAR</LcdLabel>
        </LcdCell>
        <LcdCell $w={44} $ml={27}>
          <LcdValue $big>1</LcdValue>
          <LcdLabel>BEAT</LcdLabel>
        </LcdCell>
        <LcdCell $w={36} $ml={14}>
          <LcdValue>1</LcdValue>
          <LcdLabel>DIV</LcdLabel>
        </LcdCell>
        <LcdCell $w={64} $ml={14}>
          <LcdValue>
            <Dim>00</Dim>1
          </LcdValue>
          <LcdLabel>TICK</LcdLabel>
        </LcdCell>
        <LcdDivider />
        <LcdCell $w={72}>
          <LcdValue $big>01</LcdValue>
          <LcdLabel>HR</LcdLabel>
        </LcdCell>
        <LcdCell $w={81}>
          <LcdValue $big>:00</LcdValue>
          <LcdLabel $shift={14}>MIN</LcdLabel>
        </LcdCell>
        <LcdCell $w={48}>
          <LcdValue>:00</LcdValue>
          <LcdLabel $shift={4}>SEC</LcdLabel>
        </LcdCell>
        <LcdCell $w={48}>
          <LcdValue>:00</LcdValue>
          <LcdLabel $shift={14}>FR</LcdLabel>
        </LcdCell>
        <LcdCell $w={48}>
          <LcdValue>.00</LcdValue>
          <LcdLabel $shift={12}>SUB</LcdLabel>
        </LcdCell>
      </LcdBody>
      <LcdChevron>
        <ChevronIcon color="#c8d0dc" w={18} h={13} />
      </LcdChevron>
    </Lcd>
  )
}

export default function App() {
  return (
    <Window>
      <Global />
      <TopBar>
        <TitleRow>
          <Lights>
            <Light $color="#ef6a5e" $dot />
            <Light $color="#f5bf4f" />
            <Light $color="#61c554" />
          </Lights>
          <Title>
            <FileIcon />
            Weekly Note Composing Jam 01.logicx - Idea 02 - Tracks
          </Title>
        </TitleRow>
        <ToolRow>
          <Group $w={264} $pad="0 14px 0 11px">
            <LibraryIcon />
            <ToggleIcon />
            <HelpIcon />
            <StoreIcon />
          </Group>
          <Group $w={199} $ml={49} $pad="0 21px 0 14px">
            <KnobIcon />
            <MixerIcon />
            <PencilIcon />
          </Group>
          <Group $w={510} $ml={75} $start $pad="0 0 0 13px">
            <DoubleArrow left />
            <Spot $ml={34}>
              <DoubleArrow />
            </Spot>
            <Spot $ml={35}>
              <StopIcon />
            </Spot>
            <Spot $ml={49}>
              <PlayIcon />
            </Spot>
            <Spot $ml={43}>
              <RecordIcon />
            </Spot>
            <Spot $ml={36}>
              <CycleRecIcon />
            </Spot>
            <Spot $ml={18}>
              <LoopButton>
                <LoopIcon />
              </LoopButton>
            </Spot>
          </Group>
          <Transport />
          <Group $w={200} $ml={24} $pad="0 19px 0 20px">
            <ScoreXIcon />
            <TunerIcon />
            <SoloBoxIcon />
          </Group>
          <Group $w={131} $ml={50} $pad="0 16px 0 0">
            <CountIn>
              <CountDigit $s={15}>1</CountDigit>
              <CountDigit $s={19}>2</CountDigit>
              <CountDigit $s={24}>3</CountDigit>
              <CountDigit $s={29}>4</CountDigit>
            </CountIn>
            <MetronomeIcon />
          </Group>
          <Volume>
            <VolumeKnob />
          </Volume>
          <Group $w={266} $ml={26} $start $pad="0 0 0 16px">
            <ListIcon />
            <Spot $ml={35}>
              <NotesIcon />
            </Spot>
            <Spot $ml={32}>
              <LoopsIcon />
            </Spot>
            <Spot $ml={25}>
              <BrowserIcon />
            </Spot>
          </Group>
        </ToolRow>
      </TopBar>

      <EditBar>
        <Seg>
          <SegItem $w={64}>
            <BackIcon />
          </SegItem>
        </Seg>
        <Seg $ml={19}>
          <SegItem $w={119} $spread>
            Edit
            <ChevronIcon />
          </SegItem>
          <SegItem $w={192} $spread>
            Functions
            <ChevronIcon />
          </SegItem>
          <SegItem $w={131} $spread>
            View
            <ChevronIcon />
          </SegItem>
        </Seg>
        <Seg $ml={19}>
          <SegItem $w={63} $pad="0 4px 0 0">
            <GridIcon />
          </SegItem>
          <SegItem $w={61} $blue>
            <RowsIcon />
          </SegItem>
        </Seg>
        <Seg $ml={19}>
          <SegItem $w={63} $pad="0 2px 0 0">
            <CurveIcon />
          </SegItem>
          <SegItem $w={63}>
            <CrossCurveIcon />
          </SegItem>
        </Seg>
        <Seg $ml={18}>
          <SegItem $w={66} $blue>
            <FlexIcon />
          </SegItem>
        </Seg>
        <Seg $ml={437}>
          <SegItem $w={84} $spread>
            <CursorIcon />
            <ChevronIcon />
          </SegItem>
          <SegItem $w={85} $spread>
            M
            <ChevronIcon />
          </SegItem>
        </Seg>
        <FieldLabel $w={77} $ml={89}>
          Snap:
        </FieldLabel>
        <Select $w={327}>
          Smart
          <UpDownIcon />
        </Select>
        <FieldLabel $w={73} $ml={22}>
          Drag:
        </FieldLabel>
        <Select $w={209}>
          No Overlap
          <UpDownIcon />
        </Select>
        <Seg $ml={19}>
          <SegItem $w={62}>
            <WaveIcon />
          </SegItem>
        </Seg>
        <Seg $ml={18}>
          <SegItem $w={62}>
            <FitVIcon />
          </SegItem>
          <SegItem $w={63}>
            <FitHIcon />
          </SegItem>
        </Seg>
        <ZoomWell>
          <ZoomPart $w={148} $gap={17} $pad="0 12px 0 13px">
            <VArrowIcon />
            <ZoomTrack>
              <ZoomKnob $ml={8} />
            </ZoomTrack>
          </ZoomPart>
          <ZoomPart $w={151} $gap={9} $pad="0 13px 0 10px">
            <HArrowIcon />
            <ZoomTrack>
              <ZoomKnob $ml={1} />
            </ZoomTrack>
          </ZoomPart>
        </ZoomWell>
      </EditBar>

      <Main>
        <TrackColumn>
          <TrackTools>
            <SquareButton>
              <PlusIcon />
            </SquareButton>
            <SquareButton $ml={21}>
              <DuplicateIcon />
            </SquareButton>
            <SquareButton $ml={21} $on>
              H
            </SquareButton>
            <SquareButton $ml={21}>S</SquareButton>
            <SquareButton $ml={222}>
              <StoreIcon color="#f2f2f2" w={30} h={24} />
            </SquareButton>
          </TrackTools>
          {tracks.map(([name, flags], i) => (
            <Track key={i} index={i + 1} name={name} flags={flags} />
          ))}
          <TrackRest />
        </TrackColumn>
        <Arrange>
          <RulerRow>
            <RulerCap $w={20}>
              <Ico w={16} h={24}>
                <path d="M1 0 L15 12 L1 24 Z" fill="#5a5a5a" />
              </Ico>
            </RulerCap>
            <Ruler>
              {rulerBars.map((bar) => (
                <RulerBar key={bar} $first={bar === 1}>
                  {bar < 113 ? bar : ""}
                </RulerBar>
              ))}
            </Ruler>
            <RulerCap $w={16}>
              <Ico w={16} h={24}>
                <path d="M15 0 L1 12 L15 24 Z" fill="#5a5a5a" />
              </Ico>
            </RulerCap>
          </RulerRow>
          <BeatStrip>
            <BeatTicks />
          </BeatStrip>
          <Lanes>
            {tracks.map((_, i) => (
              <TrackLane key={i} index={i + 1} />
            ))}
          </Lanes>
          <ArrangeRest />
          <RightEdge />
          <PlayLine />
          <PlayHead width="34" height="33" viewBox="0 0 34 33">
            <path d="M3 0 H31 a3 3 0 0 1 3 3 V17 L17 33 L0 17 V3 a3 3 0 0 1 3 -3 Z" fill="#a8a8a8" />
          </PlayHead>
        </Arrange>
        <VScroll>
          <VThumb />
        </VScroll>
      </Main>
      <BottomBar>
        <HThumb />
      </BottomBar>

      <Tooltip>
        Clear/Recall Solo
        <ToolKey>⌥S</ToolKey>
      </Tooltip>
    </Window>
  )
}
